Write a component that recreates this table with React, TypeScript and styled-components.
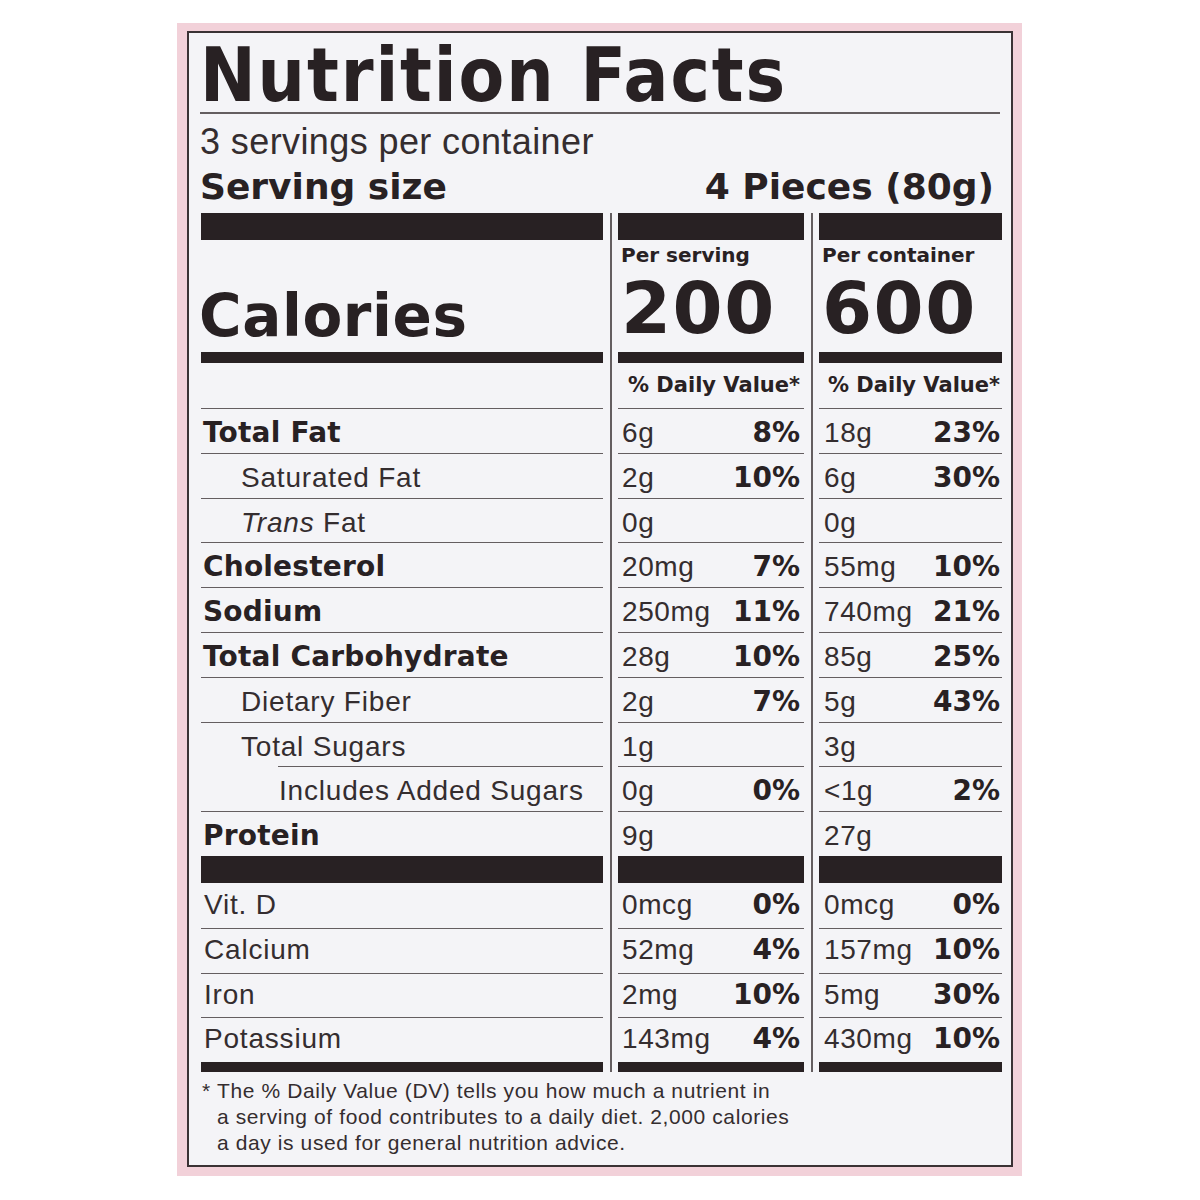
import React from "react";
import styled, { createGlobalStyle } from "styled-components";

const INK = "#282123";
const TEXT = "#342d2f";
const RULE = "#645e60";
const BOLD = `"DejaVu Sans", "Liberation Sans", sans-serif`;
const REG = `"Liberation Sans", Arial, sans-serif`;

const Global = createGlobalStyle`
  html, body { margin: 0; padding: 0; background: #ffffff; }
  body { font-family: ${REG}; color: ${TEXT}; }
`;

const Page = styled.div`
  padding: 23px 0 25px 177px;
`;

const Frame = styled.div`
  width: 845px;
  box-sizing: border-box;
  background: #f2d1d9;
  padding: 8px 9px 9px 10px;
`;

const Label = styled.div`
  border: 2px solid #3a3234;
  background: #f4f4f7;
  padding: 5px 9px 9px 11px;
`;

const Title = styled.h1`
  margin: 0;
  font-family: "DejaVu Sans Condensed", "DejaVu Sans", sans-serif;
  font-stretch: condensed;
  font-weight: 700;
  font-size: 74px;
  line-height: 74px;
  letter-spacing: 1.9px;
  color: ${INK};
`;

const TitleRule = styled.div`
  height: 2px;
  background: ${RULE};
  margin: 0 2px 0 0;
`;

const Servings = styled.div`
  margin-top: 10px;
  font-family: ${REG};
  font-size: 36px;
  line-height: 36px;
  letter-spacing: 0.4px;
  color: ${TEXT};
`;

const ServingRow = styled.div`
  display: flex;
  justify-content: space-between;
  margin-top: 9px;
  padding-right: 8px;
  font-family: ${BOLD};
  font-weight: 700;
  font-size: 36px;
  line-height: 36px;
  color: ${INK};
`;

const Grid = styled.div`
  display: flex;
  margin-top: 8px;
  margin-left: 1px;
`;

const Column = styled.div<{ $w: number; $divided?: boolean }>`
  display: flex;
  flex-direction: column;
  width: ${(p) => p.$w}px;
  flex: none;
  ${(p) =>
    p.$divided &&
    `
    margin-left: 7px;
    border-left: 2px solid ${RULE};
    padding-left: 6px;
  `}
`;

const Bar = styled.div<{ $h: number }>`
  height: ${(p) => p.$h}px;
  background: ${INK};
  flex: none;
`;

const CalBlock = styled.div`
  height: 112px;
  display: flex;
  flex-direction: column;
`;

const CaloriesWord = styled.div`
  margin-top: auto;
  padding-bottom: 7px;
  margin-left: -2px;
  font-family: ${BOLD};
  font-weight: 700;
  font-size: 58px;
  line-height: 58px;
  letter-spacing: 0.6px;
  color: ${INK};
`;

const PerLabel = styled.div`
  padding: 5px 0 0 3px;
  font-family: ${BOLD};
  font-weight: 700;
  font-size: 20px;
  line-height: 20px;
  color: ${INK};
  white-space: nowrap;
`;

const CalNumber = styled.div`
  margin-top: 7px;
  padding-left: 3px;
  font-family: ${BOLD};
  font-weight: 700;
  font-size: 72px;
  line-height: 72px;
  letter-spacing: 1.5px;
  color: ${INK};
`;

const DVHeader = styled.div<{ $pr: number }>`
  height: 45px;
  box-sizing: border-box;
  padding: 12px ${(p) => p.$pr}px 0 0;
  text-align: right;
  font-family: ${BOLD};
  font-weight: 700;
  font-size: 21px;
  line-height: 21px;
  color: ${INK};
  white-space: nowrap;
`;

const Row = styled.div<{ $top: number; $inset?: number; $pl?: number; $pr?: number; $line?: boolean }>`
  height: 44.8px;
  box-sizing: border-box;
  border-top: ${(p) => (p.$line === false ? "1px solid transparent" : `1px solid ${RULE}`)};
  margin-left: ${(p) => p.$inset || 0}px;
  padding: ${(p) => p.$top}px ${(p) => p.$pr || 0}px 0 ${(p) => p.$pl || 0}px;
  display: flex;
  align-items: baseline;
  justify-content: space-between;
  white-space: nowrap;
`;

const NutrientName = styled.span<{ $bold?: boolean }>`
  font-family: ${(p) => (p.$bold ? BOLD : REG)};
  font-weight: ${(p) => (p.$bold ? 700 : 400)};
  font-size: 28px;
  line-height: 28px;
  letter-spacing: ${(p) => (p.$bold ? "0.2px" : "0.8px")};
  color: ${(p) => (p.$bold ? INK : TEXT)};
`;

const Amount = styled.span`
  font-family: ${REG};
  font-size: 28px;
  line-height: 28px;
  letter-spacing: 0.6px;
  color: ${TEXT};
`;

const Percent = styled.span`
  font-family: ${BOLD};
  font-weight: 700;
  font-size: 28px;
  line-height: 28px;
  color: ${INK};
`;

const Footnote = styled.div`
  margin-top: 6px;
  font-family: ${REG};
  font-size: 21px;
  line-height: 26px;
  color: ${TEXT};
  letter-spacing: 0.6px;
`;

const FootLine = styled.div<{ $star?: boolean }>`
  padding-left: ${(p) => (p.$star ? 2 : 17)}px;
  white-space: nowrap;
`;

const Star = styled.span`
  display: inline-block;
  width: 15px;
`;

type Nutrient = {
  name: React.ReactNode;
  bold?: boolean;
  level?: 0 | 1 | 2;
  serving: [string, string];
  container: [string, string];
};

const nutrients: Nutrient[] = [
  { name: "Total Fat", bold: true, serving: ["6g", "8%"], container: ["18g", "23%"] },
  { name: "Saturated Fat", level: 1, serving: ["2g", "10%"], container: ["6g", "30%"] },
  {
    name: (
      <>
        <i>Trans</i> Fat
      </>
    ),
    level: 1,
    serving: ["0g", ""],
    container: ["0g", ""],
  },
  { name: "Cholesterol", bold: true, serving: ["20mg", "7%"], container: ["55mg", "10%"] },
  { name: "Sodium", bold: true, serving: ["250mg", "11%"], container: ["740mg", "21%"] },
  { name: "Total Carbohydrate", bold: true, serving: ["28g", "10%"], container: ["85g", "25%"] },
  { name: "Dietary Fiber", level: 1, serving: ["2g", "7%"], container: ["5g", "43%"] },
  { name: "Total Sugars", level: 1, serving: ["1g", ""], container: ["3g", ""] },
  { name: "Includes Added Sugars", level: 2, serving: ["0g", "0%"], container: ["<1g", "2%"] },
  { name: "Protein", bold: true, serving: ["9g", ""], container: ["27g", ""] },
];

const vitamins: Nutrient[] = [
  { name: "Vit. D", serving: ["0mcg", "0%"], container: ["0mcg", "0%"] },
  { name: "Calcium", serving: ["52mg", "4%"], container: ["157mg", "10%"] },
  { name: "Iron", serving: ["2mg", "10%"], container: ["5mg", "30%"] },
  { name: "Potassium", serving: ["143mg", "4%"], container: ["430mg", "10%"] },
];

const TOP_PAD = 10;
const VIT_PAD = 7;

function nameRow(n: Nutrient, i: number, top: number, firstNoLine: boolean) {
  const level = n.level || 0;
  const inset = level === 2 ? 77 : 0;
  const pl = level === 1 ? 40 : level === 2 ? 1 : n.bold ? 2 : 3;
  return (
    <Row key={i} $top={top} $inset={inset} $pl={pl} $line={!(firstNoLine && i === 0)}>
      <NutrientName $bold={n.bold}>{n.name}</NutrientName>
    </Row>
  );
}

function valueRow(v: [string, string], i: number, top: number, pl: number, pr: number, firstNoLine: boolean) {
  return (
    <Row key={i} $top={top} $pl={pl} $pr={pr} $line={!(firstNoLine && i === 0)}>
      <Amount>{v[0]}</Amount>
      {v[1] && <Percent>{v[1]}</Percent>}
    </Row>
  );
}

export default function App() {
  return (
    <>
      <Global />
      <Page>
        <Frame>
          <Label>
            <Title>Nutrition Facts</Title>
            <TitleRule />
            <Servings>3 servings per container</Servings>
            <ServingRow>
              <span>Serving size</span>
              <span>4 Pieces (80g)</span>
            </ServingRow>
            <Grid>
              <Column $w={402}>
                <Bar $h={27} />
                <CalBlock>
                  <CaloriesWord>Calories</CaloriesWord>
                </CalBlock>
                <Bar $h={11} />
                <DVHeader $pr={0} />
                {nutrients.map((n, i) => nameRow(n, i, TOP_PAD, false))}
                <Bar $h={27} />
                {vitamins.map((n, i) => nameRow(n, i, VIT_PAD, true))}
                <Bar $h={10} />
              </Column>
              <Column $w={186} $divided>
                <Bar $h={27} />
                <CalBlock>
                  <PerLabel>Per serving</PerLabel>
                  <CalNumber>200</CalNumber>
                </CalBlock>
                <Bar $h={11} />
                <DVHeader $pr={4}>% Daily Value*</DVHeader>
                {nutrients.map((n, i) => valueRow(n.serving, i, TOP_PAD, 4, 4, false))}
                <Bar $h={27} />
                {vitamins.map((n, i) => valueRow(n.serving, i, VIT_PAD, 4, 4, true))}
                <Bar $h={10} />
              </Column>
              <Column $w={183} $divided>
                <Bar $h={27} />
                <CalBlock>
                  <PerLabel>Per container</PerLabel>
                  <CalNumber>600</CalNumber>
                </CalBlock>
                <Bar $h={11} />
                <DVHeader $pr={2}>% Daily Value*</DVHeader>
                {nutrients.map((n, i) => valueRow(n.container, i, TOP_PAD, 5, 2, false))}
                <Bar $h={27} />
                {vitamins.map((n, i) => valueRow(n.container, i, VIT_PAD, 5, 2, true))}
                <Bar $h={10} />
              </Column>
            </Grid>
            <Footnote>
              <FootLine $star>
                <Star>*</Star>The % Daily Value (DV) tells you how much a nutrient in
              </FootLine>
              <FootLine>a serving of food contributes to a daily diet. 2,000 calories</FootLine>
              <FootLine>a day is used for general nutrition advice.</FootLine>
            </Footnote>
          </Label>
        </Frame>
      </Page>
    </>
  );
}
